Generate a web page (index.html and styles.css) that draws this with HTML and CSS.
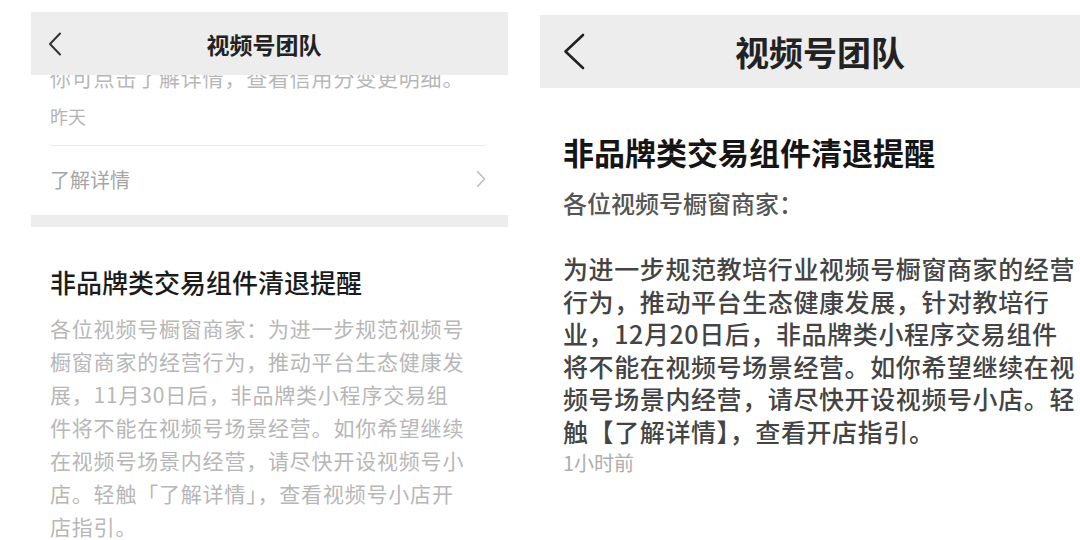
FILE: index.html
```html
<!DOCTYPE html>
<html lang="zh-CN">
<head>
    <meta charset="UTF-8">
    <meta name="viewport" content="width=device-width, initial-scale=1.0">
    <title>视频号团队</title>
    <link rel="stylesheet" href="styles.css">
</head>
<body>
    <div class="screens">
        <!-- 旧版通知 -->
        <section class="phone phone-old">
            <header class="nav">
                <svg class="nav-back" width="14" height="24" viewBox="0 0 14 24">
                    <polyline points="12,1.5 2,12 12,22.5" fill="none" stroke="#333" stroke-width="2" stroke-linecap="round" stroke-linejoin="round"/>
                </svg>
                <h1 class="nav-title">视频号团队</h1>
                <span></span>
            </header>
            <div class="feed">
                <div class="msg">
                    <p class="msg-text msg-cut">你可点击了解详情，查看信用分变更明细。</p>
                    <p class="msg-time">昨天</p>
                    <a class="msg-link">
                        <span>了解详情</span>
                        <svg width="10" height="18" viewBox="0 0 10 18">
                            <polyline points="1.5,1.5 8.5,9 1.5,16.5" fill="none" stroke="#bdbdbd" stroke-width="1.6" stroke-linecap="round" stroke-linejoin="round"/>
                        </svg>
                    </a>
                </div>
                <div class="msg">
                    <h2 class="msg-title">非品牌类交易组件清退提醒</h2>
                    <p class="msg-text">各位视频号橱窗商家：为进一步规范视频号<br>橱窗商家的经营行为，推动平台生态健康发<br>展，11月30日后，非品牌类小程序交易组<br>件将不能在视频号场景经营。如你希望继续<br>在视频号场景内经营，请尽快开设视频号小<br>店。轻触「了解详情」，查看视频号小店开<br>店指引。</p>
                </div>
            </div>
        </section>

        <!-- 新版通知 -->
        <section class="phone phone-new">
            <header class="nav">
                <svg class="nav-back" width="22" height="37" viewBox="0 0 22 37">
                    <polyline points="20,2 2.5,18.5 20,35" fill="none" stroke="#222" stroke-width="2.6" stroke-linecap="round" stroke-linejoin="round"/>
                </svg>
                <h1 class="nav-title">视频号团队</h1>
                <span></span>
            </header>
            <div class="notice">
                <h2 class="notice-title">非品牌类交易组件清退提醒</h2>
                <p class="notice-greet">各位视频号橱窗商家：</p>
                <p class="notice-text">为进一步规范教培行业视频号橱窗商家的经营<br>行为，推动平台生态健康发展，针对教培行<br>业，12月20日后，非品牌类小程序交易组件<br>将不能在视频号场景经营。如你希望继续在视<br>频号场景内经营，请尽快开设视频号小店。轻<br>触【了解详情】，查看开店指引。</p>
                <p class="notice-time">1小时前</p>
            </div>
        </section>
    </div>
</body>
</html>
```

FILE: styles.css
```css
* {
    box-sizing: border-box;
}

body {
    margin: 0;
    background: #fff;
    font-family: "Noto Sans CJK SC", "Noto Sans", sans-serif;
    color: #333;
    overflow: hidden;
}

p, h1, h2 {
    margin: 0;
}

.screens {
    display: flex;
    align-items: flex-start;
    gap: 32px;
    padding-left: 31px;
    height: 540px;
    overflow: hidden;
}

.phone {
    flex: none;
    display: flex;
    flex-direction: column;
    background: #fff;
}

.nav {
    display: grid;
    grid-template-columns: 1fr auto 1fr;
    align-items: center;
    background: #ededed;
}

.nav-title {
    font-weight: 700;
    color: #222;
}

/* 左边：旧版 */
.phone-old {
    width: 477px;
    margin-top: 12px;
    height: 528px;
}

.phone-old .nav {
    height: 63px;
    padding: 0 28px 0 17px;
}

.phone-old .nav-title {
    font-size: 23px;
    line-height: 30px;
}

.feed {
    flex: 1;
    overflow: hidden;
}

.msg {
    padding: 0 22px 0 19px;
}

.msg + .msg {
    border-top: 12px solid #ededed;
    padding-top: 37px;
}

.msg-text {
    font-size: 21px;
    line-height: 33px;
    letter-spacing: 0.8px;
    color: #b7b7b7;
}

.msg-cut {
    margin-top: -14px;
}

.msg-time {
    margin-top: 10px;
    padding-bottom: 17px;
    font-size: 18px;
    line-height: 24px;
    color: #b3b3b3;
    border-bottom: 1px solid #ececec;
}

.msg-link {
    display: flex;
    justify-content: space-between;
    align-items: center;
    height: 66px;
    margin-bottom: 3px;
    font-size: 20px;
    color: #a6a6a6;
}

.msg-title {
    font-size: 26px;
    line-height: 36px;
    font-weight: 500;
    color: #1c1c1c;
    margin-bottom: 12px;
}

/* 右边：新版 */
.phone-new {
    width: 562px;
    margin-top: 15px;
}

.phone-new .nav {
    height: 73px;
    padding: 0 25px 0 23px;
}

.phone-new .nav-title {
    font-size: 34px;
    line-height: 44px;
}

.notice {
    padding: 44px 0 0 23px;
}

.notice-title {
    font-size: 31px;
    line-height: 40px;
    font-weight: 700;
    color: #151515;
}

.notice-greet {
    margin-top: 15px;
    font-size: 24px;
    line-height: 32px;
    font-weight: 500;
    color: #555;
}

.notice-text {
    margin-top: 33px;
    font-size: 25px;
    line-height: 32.5px;
    letter-spacing: 0.6px;
    font-weight: 500;
    color: #444;
}

.notice-time {
    margin-top: 3px;
    font-size: 20px;
    line-height: 26px;
    color: #adadad;
}
```
